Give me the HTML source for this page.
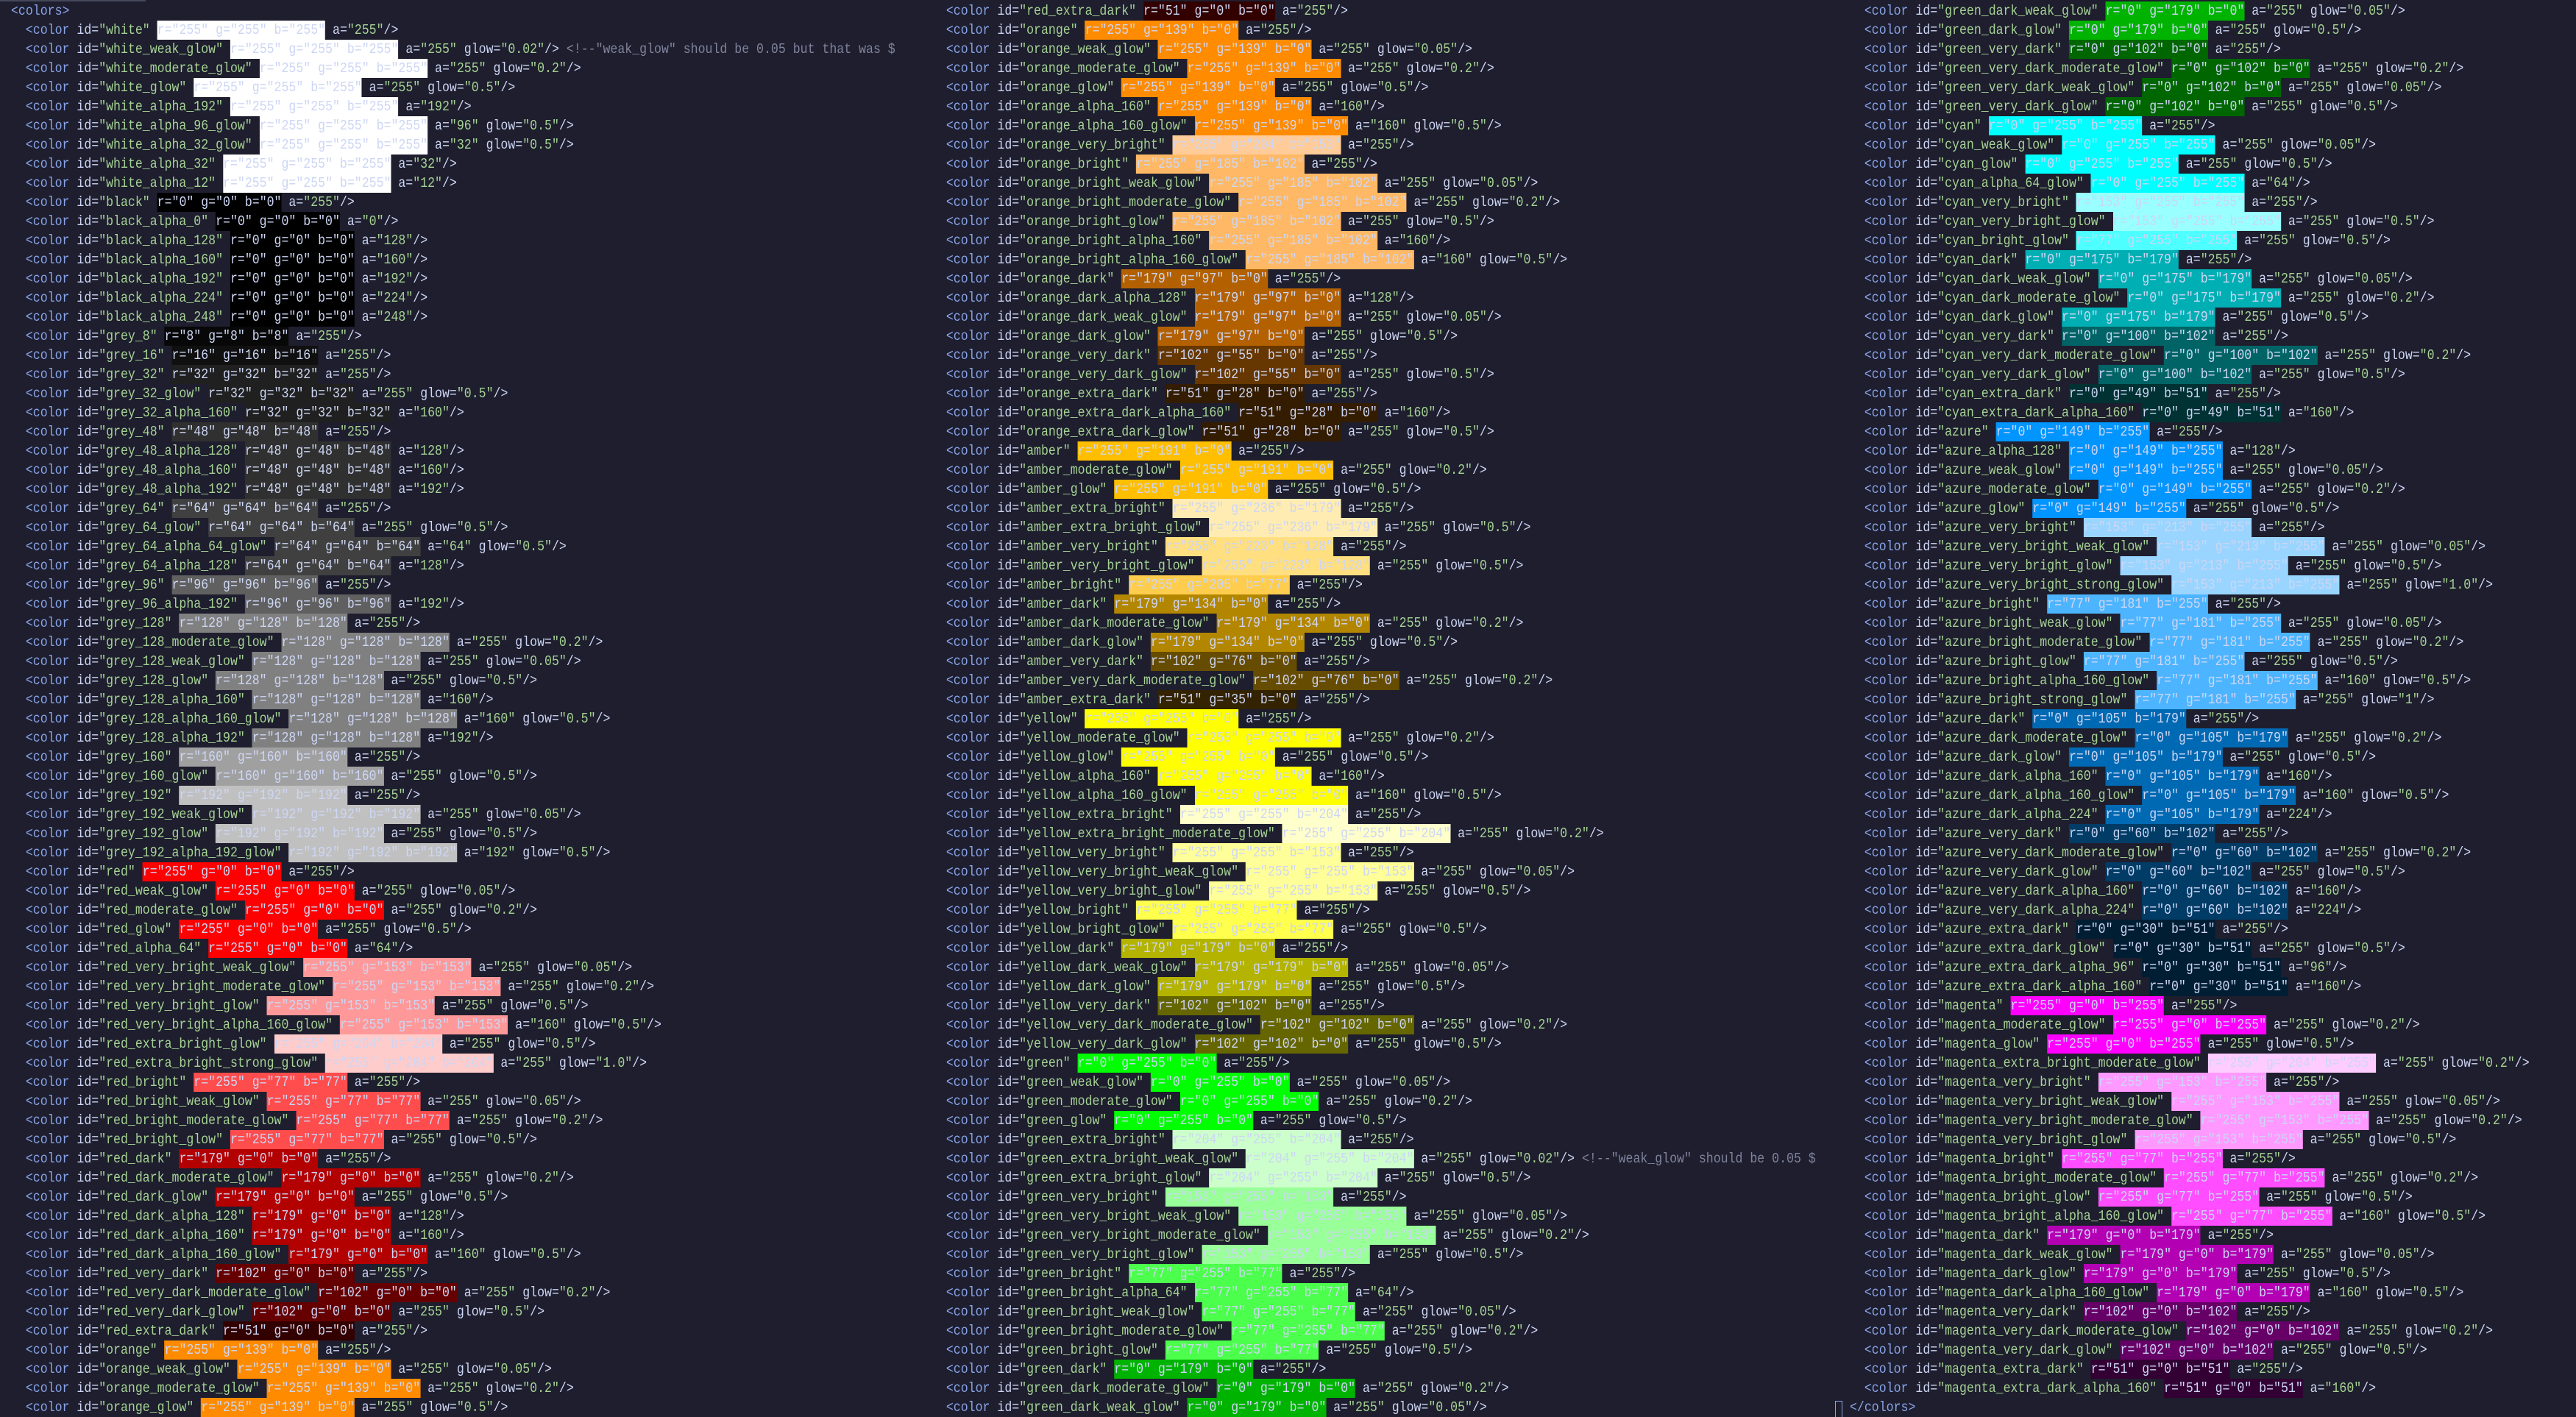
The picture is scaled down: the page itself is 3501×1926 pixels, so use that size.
<!DOCTYPE html>
<html><head><meta charset="utf-8"><style>
html,body{margin:0;padding:0;background:#1e1e2e;width:3501px;height:1926px;overflow:hidden;position:relative}
.topbar{position:absolute;left:0;top:0;width:198px;height:2px;background:#45475a}
.col{position:absolute;top:2px;height:1924px;overflow:hidden}
.in{font-family:"Liberation Mono",monospace;font-size:19px;color:#cdd6f4;transform:scaleX(0.871);transform-origin:0 0;width:3000px}
p{margin:0;height:26px;line-height:26px;white-space:pre}
b{font-weight:normal;color:#89a4e8}
s{text-decoration:none;color:#a6d394}
u{text-decoration:none;color:#cdd6f4;display:inline-block;height:26px}
i{font-style:normal;color:#7f849c}
.cur{position:absolute;left:2494px;top:1904px;width:8px;height:21px;border:1px solid #89a4e8}
</style></head><body>
<div class="topbar"></div>
<div class="col" style="left:15px;width:1245px"><div class="in">
<p><b>&lt;colors&gt;</b></p>
<p>  <b>&lt;color</b> id=<s>"white"</s> <u style="background:#ffffff">r="255" g="255" b="255"</u> a=<s>"255"</s>/&gt;</p>
<p>  <b>&lt;color</b> id=<s>"white_weak_glow"</s> <u style="background:#ffffff">r="255" g="255" b="255"</u> a=<s>"255"</s> glow=<s>"0.02"</s>/&gt; <i>&lt;!--"weak_glow" should be 0.05 but that was $</i></p>
<p>  <b>&lt;color</b> id=<s>"white_moderate_glow"</s> <u style="background:#ffffff">r="255" g="255" b="255"</u> a=<s>"255"</s> glow=<s>"0.2"</s>/&gt;</p>
<p>  <b>&lt;color</b> id=<s>"white_glow"</s> <u style="background:#ffffff">r="255" g="255" b="255"</u> a=<s>"255"</s> glow=<s>"0.5"</s>/&gt;</p>
<p>  <b>&lt;color</b> id=<s>"white_alpha_192"</s> <u style="background:#ffffff">r="255" g="255" b="255"</u> a=<s>"192"</s>/&gt;</p>
<p>  <b>&lt;color</b> id=<s>"white_alpha_96_glow"</s> <u style="background:#ffffff">r="255" g="255" b="255"</u> a=<s>"96"</s> glow=<s>"0.5"</s>/&gt;</p>
<p>  <b>&lt;color</b> id=<s>"white_alpha_32_glow"</s> <u style="background:#ffffff">r="255" g="255" b="255"</u> a=<s>"32"</s> glow=<s>"0.5"</s>/&gt;</p>
<p>  <b>&lt;color</b> id=<s>"white_alpha_32"</s> <u style="background:#ffffff">r="255" g="255" b="255"</u> a=<s>"32"</s>/&gt;</p>
<p>  <b>&lt;color</b> id=<s>"white_alpha_12"</s> <u style="background:#ffffff">r="255" g="255" b="255"</u> a=<s>"12"</s>/&gt;</p>
<p>  <b>&lt;color</b> id=<s>"black"</s> <u style="background:#000000">r="0" g="0" b="0"</u> a=<s>"255"</s>/&gt;</p>
<p>  <b>&lt;color</b> id=<s>"black_alpha_0"</s> <u style="background:#000000">r="0" g="0" b="0"</u> a=<s>"0"</s>/&gt;</p>
<p>  <b>&lt;color</b> id=<s>"black_alpha_128"</s> <u style="background:#000000">r="0" g="0" b="0"</u> a=<s>"128"</s>/&gt;</p>
<p>  <b>&lt;color</b> id=<s>"black_alpha_160"</s> <u style="background:#000000">r="0" g="0" b="0"</u> a=<s>"160"</s>/&gt;</p>
<p>  <b>&lt;color</b> id=<s>"black_alpha_192"</s> <u style="background:#000000">r="0" g="0" b="0"</u> a=<s>"192"</s>/&gt;</p>
<p>  <b>&lt;color</b> id=<s>"black_alpha_224"</s> <u style="background:#000000">r="0" g="0" b="0"</u> a=<s>"224"</s>/&gt;</p>
<p>  <b>&lt;color</b> id=<s>"black_alpha_248"</s> <u style="background:#000000">r="0" g="0" b="0"</u> a=<s>"248"</s>/&gt;</p>
<p>  <b>&lt;color</b> id=<s>"grey_8"</s> <u style="background:#080808">r="8" g="8" b="8"</u> a=<s>"255"</s>/&gt;</p>
<p>  <b>&lt;color</b> id=<s>"grey_16"</s> <u style="background:#101010">r="16" g="16" b="16"</u> a=<s>"255"</s>/&gt;</p>
<p>  <b>&lt;color</b> id=<s>"grey_32"</s> <u style="background:#202020">r="32" g="32" b="32"</u> a=<s>"255"</s>/&gt;</p>
<p>  <b>&lt;color</b> id=<s>"grey_32_glow"</s> <u style="background:#202020">r="32" g="32" b="32"</u> a=<s>"255"</s> glow=<s>"0.5"</s>/&gt;</p>
<p>  <b>&lt;color</b> id=<s>"grey_32_alpha_160"</s> <u style="background:#202020">r="32" g="32" b="32"</u> a=<s>"160"</s>/&gt;</p>
<p>  <b>&lt;color</b> id=<s>"grey_48"</s> <u style="background:#303030">r="48" g="48" b="48"</u> a=<s>"255"</s>/&gt;</p>
<p>  <b>&lt;color</b> id=<s>"grey_48_alpha_128"</s> <u style="background:#303030">r="48" g="48" b="48"</u> a=<s>"128"</s>/&gt;</p>
<p>  <b>&lt;color</b> id=<s>"grey_48_alpha_160"</s> <u style="background:#303030">r="48" g="48" b="48"</u> a=<s>"160"</s>/&gt;</p>
<p>  <b>&lt;color</b> id=<s>"grey_48_alpha_192"</s> <u style="background:#303030">r="48" g="48" b="48"</u> a=<s>"192"</s>/&gt;</p>
<p>  <b>&lt;color</b> id=<s>"grey_64"</s> <u style="background:#404040">r="64" g="64" b="64"</u> a=<s>"255"</s>/&gt;</p>
<p>  <b>&lt;color</b> id=<s>"grey_64_glow"</s> <u style="background:#404040">r="64" g="64" b="64"</u> a=<s>"255"</s> glow=<s>"0.5"</s>/&gt;</p>
<p>  <b>&lt;color</b> id=<s>"grey_64_alpha_64_glow"</s> <u style="background:#404040">r="64" g="64" b="64"</u> a=<s>"64"</s> glow=<s>"0.5"</s>/&gt;</p>
<p>  <b>&lt;color</b> id=<s>"grey_64_alpha_128"</s> <u style="background:#404040">r="64" g="64" b="64"</u> a=<s>"128"</s>/&gt;</p>
<p>  <b>&lt;color</b> id=<s>"grey_96"</s> <u style="background:#606060">r="96" g="96" b="96"</u> a=<s>"255"</s>/&gt;</p>
<p>  <b>&lt;color</b> id=<s>"grey_96_alpha_192"</s> <u style="background:#606060">r="96" g="96" b="96"</u> a=<s>"192"</s>/&gt;</p>
<p>  <b>&lt;color</b> id=<s>"grey_128"</s> <u style="background:#808080">r="128" g="128" b="128"</u> a=<s>"255"</s>/&gt;</p>
<p>  <b>&lt;color</b> id=<s>"grey_128_moderate_glow"</s> <u style="background:#808080">r="128" g="128" b="128"</u> a=<s>"255"</s> glow=<s>"0.2"</s>/&gt;</p>
<p>  <b>&lt;color</b> id=<s>"grey_128_weak_glow"</s> <u style="background:#808080">r="128" g="128" b="128"</u> a=<s>"255"</s> glow=<s>"0.05"</s>/&gt;</p>
<p>  <b>&lt;color</b> id=<s>"grey_128_glow"</s> <u style="background:#808080">r="128" g="128" b="128"</u> a=<s>"255"</s> glow=<s>"0.5"</s>/&gt;</p>
<p>  <b>&lt;color</b> id=<s>"grey_128_alpha_160"</s> <u style="background:#808080">r="128" g="128" b="128"</u> a=<s>"160"</s>/&gt;</p>
<p>  <b>&lt;color</b> id=<s>"grey_128_alpha_160_glow"</s> <u style="background:#808080">r="128" g="128" b="128"</u> a=<s>"160"</s> glow=<s>"0.5"</s>/&gt;</p>
<p>  <b>&lt;color</b> id=<s>"grey_128_alpha_192"</s> <u style="background:#808080">r="128" g="128" b="128"</u> a=<s>"192"</s>/&gt;</p>
<p>  <b>&lt;color</b> id=<s>"grey_160"</s> <u style="background:#a0a0a0">r="160" g="160" b="160"</u> a=<s>"255"</s>/&gt;</p>
<p>  <b>&lt;color</b> id=<s>"grey_160_glow"</s> <u style="background:#a0a0a0">r="160" g="160" b="160"</u> a=<s>"255"</s> glow=<s>"0.5"</s>/&gt;</p>
<p>  <b>&lt;color</b> id=<s>"grey_192"</s> <u style="background:#c0c0c0">r="192" g="192" b="192"</u> a=<s>"255"</s>/&gt;</p>
<p>  <b>&lt;color</b> id=<s>"grey_192_weak_glow"</s> <u style="background:#c0c0c0">r="192" g="192" b="192"</u> a=<s>"255"</s> glow=<s>"0.05"</s>/&gt;</p>
<p>  <b>&lt;color</b> id=<s>"grey_192_glow"</s> <u style="background:#c0c0c0">r="192" g="192" b="192"</u> a=<s>"255"</s> glow=<s>"0.5"</s>/&gt;</p>
<p>  <b>&lt;color</b> id=<s>"grey_192_alpha_192_glow"</s> <u style="background:#c0c0c0">r="192" g="192" b="192"</u> a=<s>"192"</s> glow=<s>"0.5"</s>/&gt;</p>
<p>  <b>&lt;color</b> id=<s>"red"</s> <u style="background:#ff0000">r="255" g="0" b="0"</u> a=<s>"255"</s>/&gt;</p>
<p>  <b>&lt;color</b> id=<s>"red_weak_glow"</s> <u style="background:#ff0000">r="255" g="0" b="0"</u> a=<s>"255"</s> glow=<s>"0.05"</s>/&gt;</p>
<p>  <b>&lt;color</b> id=<s>"red_moderate_glow"</s> <u style="background:#ff0000">r="255" g="0" b="0"</u> a=<s>"255"</s> glow=<s>"0.2"</s>/&gt;</p>
<p>  <b>&lt;color</b> id=<s>"red_glow"</s> <u style="background:#ff0000">r="255" g="0" b="0"</u> a=<s>"255"</s> glow=<s>"0.5"</s>/&gt;</p>
<p>  <b>&lt;color</b> id=<s>"red_alpha_64"</s> <u style="background:#ff0000">r="255" g="0" b="0"</u> a=<s>"64"</s>/&gt;</p>
<p>  <b>&lt;color</b> id=<s>"red_very_bright_weak_glow"</s> <u style="background:#ff9999">r="255" g="153" b="153"</u> a=<s>"255"</s> glow=<s>"0.05"</s>/&gt;</p>
<p>  <b>&lt;color</b> id=<s>"red_very_bright_moderate_glow"</s> <u style="background:#ff9999">r="255" g="153" b="153"</u> a=<s>"255"</s> glow=<s>"0.2"</s>/&gt;</p>
<p>  <b>&lt;color</b> id=<s>"red_very_bright_glow"</s> <u style="background:#ff9999">r="255" g="153" b="153"</u> a=<s>"255"</s> glow=<s>"0.5"</s>/&gt;</p>
<p>  <b>&lt;color</b> id=<s>"red_very_bright_alpha_160_glow"</s> <u style="background:#ff9999">r="255" g="153" b="153"</u> a=<s>"160"</s> glow=<s>"0.5"</s>/&gt;</p>
<p>  <b>&lt;color</b> id=<s>"red_extra_bright_glow"</s> <u style="background:#ffcccc">r="255" g="204" b="204"</u> a=<s>"255"</s> glow=<s>"0.5"</s>/&gt;</p>
<p>  <b>&lt;color</b> id=<s>"red_extra_bright_strong_glow"</s> <u style="background:#ffcccc">r="255" g="204" b="204"</u> a=<s>"255"</s> glow=<s>"1.0"</s>/&gt;</p>
<p>  <b>&lt;color</b> id=<s>"red_bright"</s> <u style="background:#ff4d4d">r="255" g="77" b="77"</u> a=<s>"255"</s>/&gt;</p>
<p>  <b>&lt;color</b> id=<s>"red_bright_weak_glow"</s> <u style="background:#ff4d4d">r="255" g="77" b="77"</u> a=<s>"255"</s> glow=<s>"0.05"</s>/&gt;</p>
<p>  <b>&lt;color</b> id=<s>"red_bright_moderate_glow"</s> <u style="background:#ff4d4d">r="255" g="77" b="77"</u> a=<s>"255"</s> glow=<s>"0.2"</s>/&gt;</p>
<p>  <b>&lt;color</b> id=<s>"red_bright_glow"</s> <u style="background:#ff4d4d">r="255" g="77" b="77"</u> a=<s>"255"</s> glow=<s>"0.5"</s>/&gt;</p>
<p>  <b>&lt;color</b> id=<s>"red_dark"</s> <u style="background:#b30000">r="179" g="0" b="0"</u> a=<s>"255"</s>/&gt;</p>
<p>  <b>&lt;color</b> id=<s>"red_dark_moderate_glow"</s> <u style="background:#b30000">r="179" g="0" b="0"</u> a=<s>"255"</s> glow=<s>"0.2"</s>/&gt;</p>
<p>  <b>&lt;color</b> id=<s>"red_dark_glow"</s> <u style="background:#b30000">r="179" g="0" b="0"</u> a=<s>"255"</s> glow=<s>"0.5"</s>/&gt;</p>
<p>  <b>&lt;color</b> id=<s>"red_dark_alpha_128"</s> <u style="background:#b30000">r="179" g="0" b="0"</u> a=<s>"128"</s>/&gt;</p>
<p>  <b>&lt;color</b> id=<s>"red_dark_alpha_160"</s> <u style="background:#b30000">r="179" g="0" b="0"</u> a=<s>"160"</s>/&gt;</p>
<p>  <b>&lt;color</b> id=<s>"red_dark_alpha_160_glow"</s> <u style="background:#b30000">r="179" g="0" b="0"</u> a=<s>"160"</s> glow=<s>"0.5"</s>/&gt;</p>
<p>  <b>&lt;color</b> id=<s>"red_very_dark"</s> <u style="background:#660000">r="102" g="0" b="0"</u> a=<s>"255"</s>/&gt;</p>
<p>  <b>&lt;color</b> id=<s>"red_very_dark_moderate_glow"</s> <u style="background:#660000">r="102" g="0" b="0"</u> a=<s>"255"</s> glow=<s>"0.2"</s>/&gt;</p>
<p>  <b>&lt;color</b> id=<s>"red_very_dark_glow"</s> <u style="background:#660000">r="102" g="0" b="0"</u> a=<s>"255"</s> glow=<s>"0.5"</s>/&gt;</p>
<p>  <b>&lt;color</b> id=<s>"red_extra_dark"</s> <u style="background:#330000">r="51" g="0" b="0"</u> a=<s>"255"</s>/&gt;</p>
<p>  <b>&lt;color</b> id=<s>"orange"</s> <u style="background:#ff8b00">r="255" g="139" b="0"</u> a=<s>"255"</s>/&gt;</p>
<p>  <b>&lt;color</b> id=<s>"orange_weak_glow"</s> <u style="background:#ff8b00">r="255" g="139" b="0"</u> a=<s>"255"</s> glow=<s>"0.05"</s>/&gt;</p>
<p>  <b>&lt;color</b> id=<s>"orange_moderate_glow"</s> <u style="background:#ff8b00">r="255" g="139" b="0"</u> a=<s>"255"</s> glow=<s>"0.2"</s>/&gt;</p>
<p>  <b>&lt;color</b> id=<s>"orange_glow"</s> <u style="background:#ff8b00">r="255" g="139" b="0"</u> a=<s>"255"</s> glow=<s>"0.5"</s>/&gt;</p>
</div></div>

<div class="col" style="left:1266px;width:1226px"><div class="in">
<p>  <b>&lt;color</b> id=<s>"red_extra_dark"</s> <u style="background:#330000">r="51" g="0" b="0"</u> a=<s>"255"</s>/&gt;</p>
<p>  <b>&lt;color</b> id=<s>"orange"</s> <u style="background:#ff8b00">r="255" g="139" b="0"</u> a=<s>"255"</s>/&gt;</p>
<p>  <b>&lt;color</b> id=<s>"orange_weak_glow"</s> <u style="background:#ff8b00">r="255" g="139" b="0"</u> a=<s>"255"</s> glow=<s>"0.05"</s>/&gt;</p>
<p>  <b>&lt;color</b> id=<s>"orange_moderate_glow"</s> <u style="background:#ff8b00">r="255" g="139" b="0"</u> a=<s>"255"</s> glow=<s>"0.2"</s>/&gt;</p>
<p>  <b>&lt;color</b> id=<s>"orange_glow"</s> <u style="background:#ff8b00">r="255" g="139" b="0"</u> a=<s>"255"</s> glow=<s>"0.5"</s>/&gt;</p>
<p>  <b>&lt;color</b> id=<s>"orange_alpha_160"</s> <u style="background:#ff8b00">r="255" g="139" b="0"</u> a=<s>"160"</s>/&gt;</p>
<p>  <b>&lt;color</b> id=<s>"orange_alpha_160_glow"</s> <u style="background:#ff8b00">r="255" g="139" b="0"</u> a=<s>"160"</s> glow=<s>"0.5"</s>/&gt;</p>
<p>  <b>&lt;color</b> id=<s>"orange_very_bright"</s> <u style="background:#ffcc99">r="255" g="204" b="153"</u> a=<s>"255"</s>/&gt;</p>
<p>  <b>&lt;color</b> id=<s>"orange_bright"</s> <u style="background:#ffb966">r="255" g="185" b="102"</u> a=<s>"255"</s>/&gt;</p>
<p>  <b>&lt;color</b> id=<s>"orange_bright_weak_glow"</s> <u style="background:#ffb966">r="255" g="185" b="102"</u> a=<s>"255"</s> glow=<s>"0.05"</s>/&gt;</p>
<p>  <b>&lt;color</b> id=<s>"orange_bright_moderate_glow"</s> <u style="background:#ffb966">r="255" g="185" b="102"</u> a=<s>"255"</s> glow=<s>"0.2"</s>/&gt;</p>
<p>  <b>&lt;color</b> id=<s>"orange_bright_glow"</s> <u style="background:#ffb966">r="255" g="185" b="102"</u> a=<s>"255"</s> glow=<s>"0.5"</s>/&gt;</p>
<p>  <b>&lt;color</b> id=<s>"orange_bright_alpha_160"</s> <u style="background:#ffb966">r="255" g="185" b="102"</u> a=<s>"160"</s>/&gt;</p>
<p>  <b>&lt;color</b> id=<s>"orange_bright_alpha_160_glow"</s> <u style="background:#ffb966">r="255" g="185" b="102"</u> a=<s>"160"</s> glow=<s>"0.5"</s>/&gt;</p>
<p>  <b>&lt;color</b> id=<s>"orange_dark"</s> <u style="background:#b36100">r="179" g="97" b="0"</u> a=<s>"255"</s>/&gt;</p>
<p>  <b>&lt;color</b> id=<s>"orange_dark_alpha_128"</s> <u style="background:#b36100">r="179" g="97" b="0"</u> a=<s>"128"</s>/&gt;</p>
<p>  <b>&lt;color</b> id=<s>"orange_dark_weak_glow"</s> <u style="background:#b36100">r="179" g="97" b="0"</u> a=<s>"255"</s> glow=<s>"0.05"</s>/&gt;</p>
<p>  <b>&lt;color</b> id=<s>"orange_dark_glow"</s> <u style="background:#b36100">r="179" g="97" b="0"</u> a=<s>"255"</s> glow=<s>"0.5"</s>/&gt;</p>
<p>  <b>&lt;color</b> id=<s>"orange_very_dark"</s> <u style="background:#663700">r="102" g="55" b="0"</u> a=<s>"255"</s>/&gt;</p>
<p>  <b>&lt;color</b> id=<s>"orange_very_dark_glow"</s> <u style="background:#663700">r="102" g="55" b="0"</u> a=<s>"255"</s> glow=<s>"0.5"</s>/&gt;</p>
<p>  <b>&lt;color</b> id=<s>"orange_extra_dark"</s> <u style="background:#331c00">r="51" g="28" b="0"</u> a=<s>"255"</s>/&gt;</p>
<p>  <b>&lt;color</b> id=<s>"orange_extra_dark_alpha_160"</s> <u style="background:#331c00">r="51" g="28" b="0"</u> a=<s>"160"</s>/&gt;</p>
<p>  <b>&lt;color</b> id=<s>"orange_extra_dark_glow"</s> <u style="background:#331c00">r="51" g="28" b="0"</u> a=<s>"255"</s> glow=<s>"0.5"</s>/&gt;</p>
<p>  <b>&lt;color</b> id=<s>"amber"</s> <u style="background:#ffbf00">r="255" g="191" b="0"</u> a=<s>"255"</s>/&gt;</p>
<p>  <b>&lt;color</b> id=<s>"amber_moderate_glow"</s> <u style="background:#ffbf00">r="255" g="191" b="0"</u> a=<s>"255"</s> glow=<s>"0.2"</s>/&gt;</p>
<p>  <b>&lt;color</b> id=<s>"amber_glow"</s> <u style="background:#ffbf00">r="255" g="191" b="0"</u> a=<s>"255"</s> glow=<s>"0.5"</s>/&gt;</p>
<p>  <b>&lt;color</b> id=<s>"amber_extra_bright"</s> <u style="background:#ffecb3">r="255" g="236" b="179"</u> a=<s>"255"</s>/&gt;</p>
<p>  <b>&lt;color</b> id=<s>"amber_extra_bright_glow"</s> <u style="background:#ffecb3">r="255" g="236" b="179"</u> a=<s>"255"</s> glow=<s>"0.5"</s>/&gt;</p>
<p>  <b>&lt;color</b> id=<s>"amber_very_bright"</s> <u style="background:#ffdf80">r="255" g="223" b="128"</u> a=<s>"255"</s>/&gt;</p>
<p>  <b>&lt;color</b> id=<s>"amber_very_bright_glow"</s> <u style="background:#ffdf80">r="255" g="223" b="128"</u> a=<s>"255"</s> glow=<s>"0.5"</s>/&gt;</p>
<p>  <b>&lt;color</b> id=<s>"amber_bright"</s> <u style="background:#ffcd4d">r="255" g="205" b="77"</u> a=<s>"255"</s>/&gt;</p>
<p>  <b>&lt;color</b> id=<s>"amber_dark"</s> <u style="background:#b38600">r="179" g="134" b="0"</u> a=<s>"255"</s>/&gt;</p>
<p>  <b>&lt;color</b> id=<s>"amber_dark_moderate_glow"</s> <u style="background:#b38600">r="179" g="134" b="0"</u> a=<s>"255"</s> glow=<s>"0.2"</s>/&gt;</p>
<p>  <b>&lt;color</b> id=<s>"amber_dark_glow"</s> <u style="background:#b38600">r="179" g="134" b="0"</u> a=<s>"255"</s> glow=<s>"0.5"</s>/&gt;</p>
<p>  <b>&lt;color</b> id=<s>"amber_very_dark"</s> <u style="background:#664c00">r="102" g="76" b="0"</u> a=<s>"255"</s>/&gt;</p>
<p>  <b>&lt;color</b> id=<s>"amber_very_dark_moderate_glow"</s> <u style="background:#664c00">r="102" g="76" b="0"</u> a=<s>"255"</s> glow=<s>"0.2"</s>/&gt;</p>
<p>  <b>&lt;color</b> id=<s>"amber_extra_dark"</s> <u style="background:#332300">r="51" g="35" b="0"</u> a=<s>"255"</s>/&gt;</p>
<p>  <b>&lt;color</b> id=<s>"yellow"</s> <u style="background:#ffff00">r="255" g="255" b="0"</u> a=<s>"255"</s>/&gt;</p>
<p>  <b>&lt;color</b> id=<s>"yellow_moderate_glow"</s> <u style="background:#ffff00">r="255" g="255" b="0"</u> a=<s>"255"</s> glow=<s>"0.2"</s>/&gt;</p>
<p>  <b>&lt;color</b> id=<s>"yellow_glow"</s> <u style="background:#ffff00">r="255" g="255" b="0"</u> a=<s>"255"</s> glow=<s>"0.5"</s>/&gt;</p>
<p>  <b>&lt;color</b> id=<s>"yellow_alpha_160"</s> <u style="background:#ffff00">r="255" g="255" b="0"</u> a=<s>"160"</s>/&gt;</p>
<p>  <b>&lt;color</b> id=<s>"yellow_alpha_160_glow"</s> <u style="background:#ffff00">r="255" g="255" b="0"</u> a=<s>"160"</s> glow=<s>"0.5"</s>/&gt;</p>
<p>  <b>&lt;color</b> id=<s>"yellow_extra_bright"</s> <u style="background:#ffffcc">r="255" g="255" b="204"</u> a=<s>"255"</s>/&gt;</p>
<p>  <b>&lt;color</b> id=<s>"yellow_extra_bright_moderate_glow"</s> <u style="background:#ffffcc">r="255" g="255" b="204"</u> a=<s>"255"</s> glow=<s>"0.2"</s>/&gt;</p>
<p>  <b>&lt;color</b> id=<s>"yellow_very_bright"</s> <u style="background:#ffff99">r="255" g="255" b="153"</u> a=<s>"255"</s>/&gt;</p>
<p>  <b>&lt;color</b> id=<s>"yellow_very_bright_weak_glow"</s> <u style="background:#ffff99">r="255" g="255" b="153"</u> a=<s>"255"</s> glow=<s>"0.05"</s>/&gt;</p>
<p>  <b>&lt;color</b> id=<s>"yellow_very_bright_glow"</s> <u style="background:#ffff99">r="255" g="255" b="153"</u> a=<s>"255"</s> glow=<s>"0.5"</s>/&gt;</p>
<p>  <b>&lt;color</b> id=<s>"yellow_bright"</s> <u style="background:#ffff4d">r="255" g="255" b="77"</u> a=<s>"255"</s>/&gt;</p>
<p>  <b>&lt;color</b> id=<s>"yellow_bright_glow"</s> <u style="background:#ffff4d">r="255" g="255" b="77"</u> a=<s>"255"</s> glow=<s>"0.5"</s>/&gt;</p>
<p>  <b>&lt;color</b> id=<s>"yellow_dark"</s> <u style="background:#b3b300">r="179" g="179" b="0"</u> a=<s>"255"</s>/&gt;</p>
<p>  <b>&lt;color</b> id=<s>"yellow_dark_weak_glow"</s> <u style="background:#b3b300">r="179" g="179" b="0"</u> a=<s>"255"</s> glow=<s>"0.05"</s>/&gt;</p>
<p>  <b>&lt;color</b> id=<s>"yellow_dark_glow"</s> <u style="background:#b3b300">r="179" g="179" b="0"</u> a=<s>"255"</s> glow=<s>"0.5"</s>/&gt;</p>
<p>  <b>&lt;color</b> id=<s>"yellow_very_dark"</s> <u style="background:#666600">r="102" g="102" b="0"</u> a=<s>"255"</s>/&gt;</p>
<p>  <b>&lt;color</b> id=<s>"yellow_very_dark_moderate_glow"</s> <u style="background:#666600">r="102" g="102" b="0"</u> a=<s>"255"</s> glow=<s>"0.2"</s>/&gt;</p>
<p>  <b>&lt;color</b> id=<s>"yellow_very_dark_glow"</s> <u style="background:#666600">r="102" g="102" b="0"</u> a=<s>"255"</s> glow=<s>"0.5"</s>/&gt;</p>
<p>  <b>&lt;color</b> id=<s>"green"</s> <u style="background:#00ff00">r="0" g="255" b="0"</u> a=<s>"255"</s>/&gt;</p>
<p>  <b>&lt;color</b> id=<s>"green_weak_glow"</s> <u style="background:#00ff00">r="0" g="255" b="0"</u> a=<s>"255"</s> glow=<s>"0.05"</s>/&gt;</p>
<p>  <b>&lt;color</b> id=<s>"green_moderate_glow"</s> <u style="background:#00ff00">r="0" g="255" b="0"</u> a=<s>"255"</s> glow=<s>"0.2"</s>/&gt;</p>
<p>  <b>&lt;color</b> id=<s>"green_glow"</s> <u style="background:#00ff00">r="0" g="255" b="0"</u> a=<s>"255"</s> glow=<s>"0.5"</s>/&gt;</p>
<p>  <b>&lt;color</b> id=<s>"green_extra_bright"</s> <u style="background:#ccffcc">r="204" g="255" b="204"</u> a=<s>"255"</s>/&gt;</p>
<p>  <b>&lt;color</b> id=<s>"green_extra_bright_weak_glow"</s> <u style="background:#ccffcc">r="204" g="255" b="204"</u> a=<s>"255"</s> glow=<s>"0.02"</s>/&gt; <i>&lt;!--"weak_glow" should be 0.05 $</i></p>
<p>  <b>&lt;color</b> id=<s>"green_extra_bright_glow"</s> <u style="background:#ccffcc">r="204" g="255" b="204"</u> a=<s>"255"</s> glow=<s>"0.5"</s>/&gt;</p>
<p>  <b>&lt;color</b> id=<s>"green_very_bright"</s> <u style="background:#99ff99">r="153" g="255" b="153"</u> a=<s>"255"</s>/&gt;</p>
<p>  <b>&lt;color</b> id=<s>"green_very_bright_weak_glow"</s> <u style="background:#99ff99">r="153" g="255" b="153"</u> a=<s>"255"</s> glow=<s>"0.05"</s>/&gt;</p>
<p>  <b>&lt;color</b> id=<s>"green_very_bright_moderate_glow"</s> <u style="background:#99ff99">r="153" g="255" b="153"</u> a=<s>"255"</s> glow=<s>"0.2"</s>/&gt;</p>
<p>  <b>&lt;color</b> id=<s>"green_very_bright_glow"</s> <u style="background:#99ff99">r="153" g="255" b="153"</u> a=<s>"255"</s> glow=<s>"0.5"</s>/&gt;</p>
<p>  <b>&lt;color</b> id=<s>"green_bright"</s> <u style="background:#4dff4d">r="77" g="255" b="77"</u> a=<s>"255"</s>/&gt;</p>
<p>  <b>&lt;color</b> id=<s>"green_bright_alpha_64"</s> <u style="background:#4dff4d">r="77" g="255" b="77"</u> a=<s>"64"</s>/&gt;</p>
<p>  <b>&lt;color</b> id=<s>"green_bright_weak_glow"</s> <u style="background:#4dff4d">r="77" g="255" b="77"</u> a=<s>"255"</s> glow=<s>"0.05"</s>/&gt;</p>
<p>  <b>&lt;color</b> id=<s>"green_bright_moderate_glow"</s> <u style="background:#4dff4d">r="77" g="255" b="77"</u> a=<s>"255"</s> glow=<s>"0.2"</s>/&gt;</p>
<p>  <b>&lt;color</b> id=<s>"green_bright_glow"</s> <u style="background:#4dff4d">r="77" g="255" b="77"</u> a=<s>"255"</s> glow=<s>"0.5"</s>/&gt;</p>
<p>  <b>&lt;color</b> id=<s>"green_dark"</s> <u style="background:#00b300">r="0" g="179" b="0"</u> a=<s>"255"</s>/&gt;</p>
<p>  <b>&lt;color</b> id=<s>"green_dark_moderate_glow"</s> <u style="background:#00b300">r="0" g="179" b="0"</u> a=<s>"255"</s> glow=<s>"0.2"</s>/&gt;</p>
<p>  <b>&lt;color</b> id=<s>"green_dark_weak_glow"</s> <u style="background:#00b300">r="0" g="179" b="0"</u> a=<s>"255"</s> glow=<s>"0.05"</s>/&gt;</p>
</div></div>

<div class="cur"></div>
<div class="col" style="left:2514px;width:987px"><div class="in">
<p>  <b>&lt;color</b> id=<s>"green_dark_weak_glow"</s> <u style="background:#00b300">r="0" g="179" b="0"</u> a=<s>"255"</s> glow=<s>"0.05"</s>/&gt;</p>
<p>  <b>&lt;color</b> id=<s>"green_dark_glow"</s> <u style="background:#00b300">r="0" g="179" b="0"</u> a=<s>"255"</s> glow=<s>"0.5"</s>/&gt;</p>
<p>  <b>&lt;color</b> id=<s>"green_very_dark"</s> <u style="background:#006600">r="0" g="102" b="0"</u> a=<s>"255"</s>/&gt;</p>
<p>  <b>&lt;color</b> id=<s>"green_very_dark_moderate_glow"</s> <u style="background:#006600">r="0" g="102" b="0"</u> a=<s>"255"</s> glow=<s>"0.2"</s>/&gt;</p>
<p>  <b>&lt;color</b> id=<s>"green_very_dark_weak_glow"</s> <u style="background:#006600">r="0" g="102" b="0"</u> a=<s>"255"</s> glow=<s>"0.05"</s>/&gt;</p>
<p>  <b>&lt;color</b> id=<s>"green_very_dark_glow"</s> <u style="background:#006600">r="0" g="102" b="0"</u> a=<s>"255"</s> glow=<s>"0.5"</s>/&gt;</p>
<p>  <b>&lt;color</b> id=<s>"cyan"</s> <u style="background:#00ffff">r="0" g="255" b="255"</u> a=<s>"255"</s>/&gt;</p>
<p>  <b>&lt;color</b> id=<s>"cyan_weak_glow"</s> <u style="background:#00ffff">r="0" g="255" b="255"</u> a=<s>"255"</s> glow=<s>"0.05"</s>/&gt;</p>
<p>  <b>&lt;color</b> id=<s>"cyan_glow"</s> <u style="background:#00ffff">r="0" g="255" b="255"</u> a=<s>"255"</s> glow=<s>"0.5"</s>/&gt;</p>
<p>  <b>&lt;color</b> id=<s>"cyan_alpha_64_glow"</s> <u style="background:#00ffff">r="0" g="255" b="255"</u> a=<s>"64"</s>/&gt;</p>
<p>  <b>&lt;color</b> id=<s>"cyan_very_bright"</s> <u style="background:#99ffff">r="153" g="255" b="255"</u> a=<s>"255"</s>/&gt;</p>
<p>  <b>&lt;color</b> id=<s>"cyan_very_bright_glow"</s> <u style="background:#99ffff">r="153" g="255" b="255"</u> a=<s>"255"</s> glow=<s>"0.5"</s>/&gt;</p>
<p>  <b>&lt;color</b> id=<s>"cyan_bright_glow"</s> <u style="background:#4dffff">r="77" g="255" b="255"</u> a=<s>"255"</s> glow=<s>"0.5"</s>/&gt;</p>
<p>  <b>&lt;color</b> id=<s>"cyan_dark"</s> <u style="background:#00afb3">r="0" g="175" b="179"</u> a=<s>"255"</s>/&gt;</p>
<p>  <b>&lt;color</b> id=<s>"cyan_dark_weak_glow"</s> <u style="background:#00afb3">r="0" g="175" b="179"</u> a=<s>"255"</s> glow=<s>"0.05"</s>/&gt;</p>
<p>  <b>&lt;color</b> id=<s>"cyan_dark_moderate_glow"</s> <u style="background:#00afb3">r="0" g="175" b="179"</u> a=<s>"255"</s> glow=<s>"0.2"</s>/&gt;</p>
<p>  <b>&lt;color</b> id=<s>"cyan_dark_glow"</s> <u style="background:#00afb3">r="0" g="175" b="179"</u> a=<s>"255"</s> glow=<s>"0.5"</s>/&gt;</p>
<p>  <b>&lt;color</b> id=<s>"cyan_very_dark"</s> <u style="background:#006466">r="0" g="100" b="102"</u> a=<s>"255"</s>/&gt;</p>
<p>  <b>&lt;color</b> id=<s>"cyan_very_dark_moderate_glow"</s> <u style="background:#006466">r="0" g="100" b="102"</u> a=<s>"255"</s> glow=<s>"0.2"</s>/&gt;</p>
<p>  <b>&lt;color</b> id=<s>"cyan_very_dark_glow"</s> <u style="background:#006466">r="0" g="100" b="102"</u> a=<s>"255"</s> glow=<s>"0.5"</s>/&gt;</p>
<p>  <b>&lt;color</b> id=<s>"cyan_extra_dark"</s> <u style="background:#003133">r="0" g="49" b="51"</u> a=<s>"255"</s>/&gt;</p>
<p>  <b>&lt;color</b> id=<s>"cyan_extra_dark_alpha_160"</s> <u style="background:#003133">r="0" g="49" b="51"</u> a=<s>"160"</s>/&gt;</p>
<p>  <b>&lt;color</b> id=<s>"azure"</s> <u style="background:#0095ff">r="0" g="149" b="255"</u> a=<s>"255"</s>/&gt;</p>
<p>  <b>&lt;color</b> id=<s>"azure_alpha_128"</s> <u style="background:#0095ff">r="0" g="149" b="255"</u> a=<s>"128"</s>/&gt;</p>
<p>  <b>&lt;color</b> id=<s>"azure_weak_glow"</s> <u style="background:#0095ff">r="0" g="149" b="255"</u> a=<s>"255"</s> glow=<s>"0.05"</s>/&gt;</p>
<p>  <b>&lt;color</b> id=<s>"azure_moderate_glow"</s> <u style="background:#0095ff">r="0" g="149" b="255"</u> a=<s>"255"</s> glow=<s>"0.2"</s>/&gt;</p>
<p>  <b>&lt;color</b> id=<s>"azure_glow"</s> <u style="background:#0095ff">r="0" g="149" b="255"</u> a=<s>"255"</s> glow=<s>"0.5"</s>/&gt;</p>
<p>  <b>&lt;color</b> id=<s>"azure_very_bright"</s> <u style="background:#99d5ff">r="153" g="213" b="255"</u> a=<s>"255"</s>/&gt;</p>
<p>  <b>&lt;color</b> id=<s>"azure_very_bright_weak_glow"</s> <u style="background:#99d5ff">r="153" g="213" b="255"</u> a=<s>"255"</s> glow=<s>"0.05"</s>/&gt;</p>
<p>  <b>&lt;color</b> id=<s>"azure_very_bright_glow"</s> <u style="background:#99d5ff">r="153" g="213" b="255"</u> a=<s>"255"</s> glow=<s>"0.5"</s>/&gt;</p>
<p>  <b>&lt;color</b> id=<s>"azure_very_bright_strong_glow"</s> <u style="background:#99d5ff">r="153" g="213" b="255"</u> a=<s>"255"</s> glow=<s>"1.0"</s>/&gt;</p>
<p>  <b>&lt;color</b> id=<s>"azure_bright"</s> <u style="background:#4db5ff">r="77" g="181" b="255"</u> a=<s>"255"</s>/&gt;</p>
<p>  <b>&lt;color</b> id=<s>"azure_bright_weak_glow"</s> <u style="background:#4db5ff">r="77" g="181" b="255"</u> a=<s>"255"</s> glow=<s>"0.05"</s>/&gt;</p>
<p>  <b>&lt;color</b> id=<s>"azure_bright_moderate_glow"</s> <u style="background:#4db5ff">r="77" g="181" b="255"</u> a=<s>"255"</s> glow=<s>"0.2"</s>/&gt;</p>
<p>  <b>&lt;color</b> id=<s>"azure_bright_glow"</s> <u style="background:#4db5ff">r="77" g="181" b="255"</u> a=<s>"255"</s> glow=<s>"0.5"</s>/&gt;</p>
<p>  <b>&lt;color</b> id=<s>"azure_bright_alpha_160_glow"</s> <u style="background:#4db5ff">r="77" g="181" b="255"</u> a=<s>"160"</s> glow=<s>"0.5"</s>/&gt;</p>
<p>  <b>&lt;color</b> id=<s>"azure_bright_strong_glow"</s> <u style="background:#4db5ff">r="77" g="181" b="255"</u> a=<s>"255"</s> glow=<s>"1"</s>/&gt;</p>
<p>  <b>&lt;color</b> id=<s>"azure_dark"</s> <u style="background:#0069b3">r="0" g="105" b="179"</u> a=<s>"255"</s>/&gt;</p>
<p>  <b>&lt;color</b> id=<s>"azure_dark_moderate_glow"</s> <u style="background:#0069b3">r="0" g="105" b="179"</u> a=<s>"255"</s> glow=<s>"0.2"</s>/&gt;</p>
<p>  <b>&lt;color</b> id=<s>"azure_dark_glow"</s> <u style="background:#0069b3">r="0" g="105" b="179"</u> a=<s>"255"</s> glow=<s>"0.5"</s>/&gt;</p>
<p>  <b>&lt;color</b> id=<s>"azure_dark_alpha_160"</s> <u style="background:#0069b3">r="0" g="105" b="179"</u> a=<s>"160"</s>/&gt;</p>
<p>  <b>&lt;color</b> id=<s>"azure_dark_alpha_160_glow"</s> <u style="background:#0069b3">r="0" g="105" b="179"</u> a=<s>"160"</s> glow=<s>"0.5"</s>/&gt;</p>
<p>  <b>&lt;color</b> id=<s>"azure_dark_alpha_224"</s> <u style="background:#0069b3">r="0" g="105" b="179"</u> a=<s>"224"</s>/&gt;</p>
<p>  <b>&lt;color</b> id=<s>"azure_very_dark"</s> <u style="background:#003c66">r="0" g="60" b="102"</u> a=<s>"255"</s>/&gt;</p>
<p>  <b>&lt;color</b> id=<s>"azure_very_dark_moderate_glow"</s> <u style="background:#003c66">r="0" g="60" b="102"</u> a=<s>"255"</s> glow=<s>"0.2"</s>/&gt;</p>
<p>  <b>&lt;color</b> id=<s>"azure_very_dark_glow"</s> <u style="background:#003c66">r="0" g="60" b="102"</u> a=<s>"255"</s> glow=<s>"0.5"</s>/&gt;</p>
<p>  <b>&lt;color</b> id=<s>"azure_very_dark_alpha_160"</s> <u style="background:#003c66">r="0" g="60" b="102"</u> a=<s>"160"</s>/&gt;</p>
<p>  <b>&lt;color</b> id=<s>"azure_very_dark_alpha_224"</s> <u style="background:#003c66">r="0" g="60" b="102"</u> a=<s>"224"</s>/&gt;</p>
<p>  <b>&lt;color</b> id=<s>"azure_extra_dark"</s> <u style="background:#001e33">r="0" g="30" b="51"</u> a=<s>"255"</s>/&gt;</p>
<p>  <b>&lt;color</b> id=<s>"azure_extra_dark_glow"</s> <u style="background:#001e33">r="0" g="30" b="51"</u> a=<s>"255"</s> glow=<s>"0.5"</s>/&gt;</p>
<p>  <b>&lt;color</b> id=<s>"azure_extra_dark_alpha_96"</s> <u style="background:#001e33">r="0" g="30" b="51"</u> a=<s>"96"</s>/&gt;</p>
<p>  <b>&lt;color</b> id=<s>"azure_extra_dark_alpha_160"</s> <u style="background:#001e33">r="0" g="30" b="51"</u> a=<s>"160"</s>/&gt;</p>
<p>  <b>&lt;color</b> id=<s>"magenta"</s> <u style="background:#ff00ff">r="255" g="0" b="255"</u> a=<s>"255"</s>/&gt;</p>
<p>  <b>&lt;color</b> id=<s>"magenta_moderate_glow"</s> <u style="background:#ff00ff">r="255" g="0" b="255"</u> a=<s>"255"</s> glow=<s>"0.2"</s>/&gt;</p>
<p>  <b>&lt;color</b> id=<s>"magenta_glow"</s> <u style="background:#ff00ff">r="255" g="0" b="255"</u> a=<s>"255"</s> glow=<s>"0.5"</s>/&gt;</p>
<p>  <b>&lt;color</b> id=<s>"magenta_extra_bright_moderate_glow"</s> <u style="background:#ffccff">r="255" g="204" b="255"</u> a=<s>"255"</s> glow=<s>"0.2"</s>/&gt;</p>
<p>  <b>&lt;color</b> id=<s>"magenta_very_bright"</s> <u style="background:#ff99ff">r="255" g="153" b="255"</u> a=<s>"255"</s>/&gt;</p>
<p>  <b>&lt;color</b> id=<s>"magenta_very_bright_weak_glow"</s> <u style="background:#ff99ff">r="255" g="153" b="255"</u> a=<s>"255"</s> glow=<s>"0.05"</s>/&gt;</p>
<p>  <b>&lt;color</b> id=<s>"magenta_very_bright_moderate_glow"</s> <u style="background:#ff99ff">r="255" g="153" b="255"</u> a=<s>"255"</s> glow=<s>"0.2"</s>/&gt;</p>
<p>  <b>&lt;color</b> id=<s>"magenta_very_bright_glow"</s> <u style="background:#ff99ff">r="255" g="153" b="255"</u> a=<s>"255"</s> glow=<s>"0.5"</s>/&gt;</p>
<p>  <b>&lt;color</b> id=<s>"magenta_bright"</s> <u style="background:#ff4dff">r="255" g="77" b="255"</u> a=<s>"255"</s>/&gt;</p>
<p>  <b>&lt;color</b> id=<s>"magenta_bright_moderate_glow"</s> <u style="background:#ff4dff">r="255" g="77" b="255"</u> a=<s>"255"</s> glow=<s>"0.2"</s>/&gt;</p>
<p>  <b>&lt;color</b> id=<s>"magenta_bright_glow"</s> <u style="background:#ff4dff">r="255" g="77" b="255"</u> a=<s>"255"</s> glow=<s>"0.5"</s>/&gt;</p>
<p>  <b>&lt;color</b> id=<s>"magenta_bright_alpha_160_glow"</s> <u style="background:#ff4dff">r="255" g="77" b="255"</u> a=<s>"160"</s> glow=<s>"0.5"</s>/&gt;</p>
<p>  <b>&lt;color</b> id=<s>"magenta_dark"</s> <u style="background:#b300b3">r="179" g="0" b="179"</u> a=<s>"255"</s>/&gt;</p>
<p>  <b>&lt;color</b> id=<s>"magenta_dark_weak_glow"</s> <u style="background:#b300b3">r="179" g="0" b="179"</u> a=<s>"255"</s> glow=<s>"0.05"</s>/&gt;</p>
<p>  <b>&lt;color</b> id=<s>"magenta_dark_glow"</s> <u style="background:#b300b3">r="179" g="0" b="179"</u> a=<s>"255"</s> glow=<s>"0.5"</s>/&gt;</p>
<p>  <b>&lt;color</b> id=<s>"magenta_dark_alpha_160_glow"</s> <u style="background:#b300b3">r="179" g="0" b="179"</u> a=<s>"160"</s> glow=<s>"0.5"</s>/&gt;</p>
<p>  <b>&lt;color</b> id=<s>"magenta_very_dark"</s> <u style="background:#660066">r="102" g="0" b="102"</u> a=<s>"255"</s>/&gt;</p>
<p>  <b>&lt;color</b> id=<s>"magenta_very_dark_moderate_glow"</s> <u style="background:#660066">r="102" g="0" b="102"</u> a=<s>"255"</s> glow=<s>"0.2"</s>/&gt;</p>
<p>  <b>&lt;color</b> id=<s>"magenta_very_dark_glow"</s> <u style="background:#660066">r="102" g="0" b="102"</u> a=<s>"255"</s> glow=<s>"0.5"</s>/&gt;</p>
<p>  <b>&lt;color</b> id=<s>"magenta_extra_dark"</s> <u style="background:#330033">r="51" g="0" b="51"</u> a=<s>"255"</s>/&gt;</p>
<p>  <b>&lt;color</b> id=<s>"magenta_extra_dark_alpha_160"</s> <u style="background:#330033">r="51" g="0" b="51"</u> a=<s>"160"</s>/&gt;</p>
<p><b>&lt;/colors&gt;</b></p>
</div></div>
</body></html>
